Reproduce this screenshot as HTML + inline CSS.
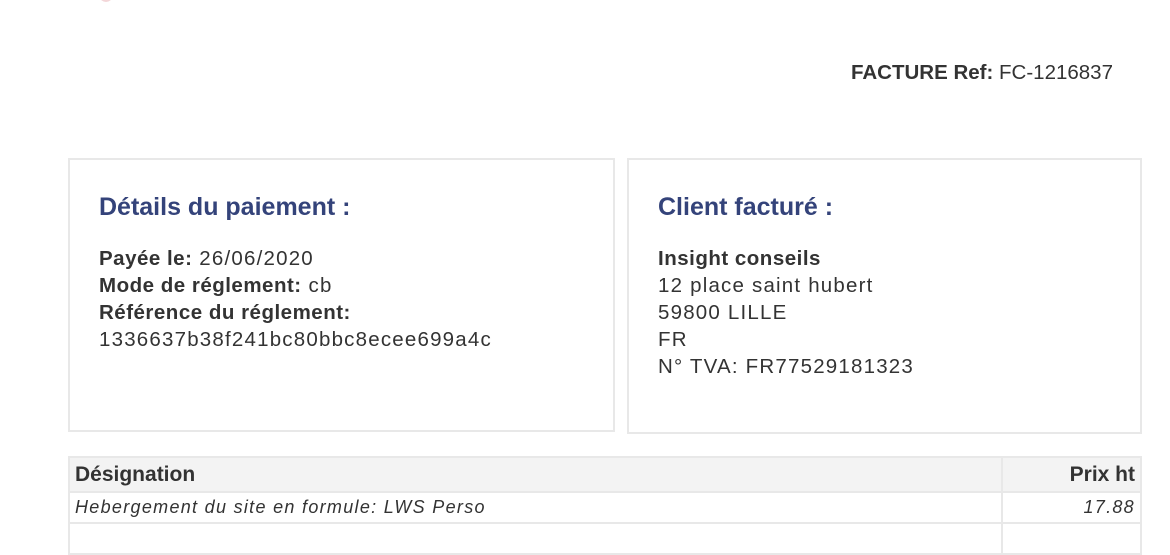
<!DOCTYPE html>
<html><head><meta charset="utf-8"><style>
body{margin:0;width:1170px;height:536px;overflow:hidden;background:#fff;font-family:"Liberation Sans",sans-serif;color:#333;position:relative}
.ref{position:absolute;right:57px;top:61px;font-size:20.5px;color:#333}
.box{position:absolute;top:158px;border:2px solid #e8e8e8;box-sizing:border-box}
.box h2{margin:0;position:absolute;left:29px;top:33px;font-size:25px;color:#34437a;font-weight:bold}
.box .t{position:absolute;left:29px;top:85px;font-size:20.5px;line-height:27px;letter-spacing:1.2px;color:#333}
.box .t b{letter-spacing:0.5px}
table{position:absolute;left:68px;top:456px;width:1074px;border-collapse:collapse}
td,th{border:2px solid #e8e8e8;padding:0 5px}
th{background:#f3f3f3;height:33px;font-size:21px;text-align:left;color:#333}
td{height:29px;font-style:italic;font-size:18px;letter-spacing:1.3px;color:#333}
.r{text-align:right}
.dot{position:absolute;left:100px;top:-8px;width:12px;height:10px;border-radius:50%;background:#f3d6d8}
</style></head><body>
<div class="dot"></div>
<div class="ref"><b>FACTURE Ref:</b> FC-1216837</div>
<div class="box" style="left:68px;width:547px;height:274px">
<h2>Détails du paiement :</h2>
<div class="t"><b>Payée le:</b> 26/06/2020<br><b>Mode de réglement:</b> cb<br><b>Référence du réglement:</b><br>1336637b38f241bc80bbc8ecee699a4c</div>
</div>
<div class="box" style="left:627px;width:515px;height:276px">
<h2>Client facturé :</h2>
<div class="t"><b>Insight conseils</b><br>12 place saint hubert<br>59800 LILLE<br>FR<br>N° TVA: FR77529181323</div>
</div>
<table>
<tr><th>Désignation</th><th class="r" style="width:127px">Prix ht</th></tr>
<tr><td>Hebergement du site en formule: LWS Perso</td><td class="r">17.88</td></tr>
<tr><td>&nbsp;</td><td></td></tr>
</table>
</body></html>
